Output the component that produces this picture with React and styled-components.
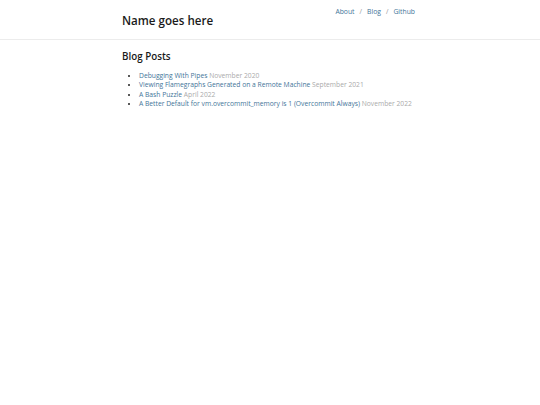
import React from 'react';
import styled, { createGlobalStyle } from 'styled-components';

const GlobalStyle = createGlobalStyle`
  body {
    margin: 0;
    background: #fff;
    font-family: "Open Sans", "Liberation Sans", sans-serif;
    color: #222;
  }
`;

const Header = styled.header`
  border-bottom: 1px solid #ececec;
  height: 39px;
`;

const Inner = styled.div`
  width: 296px;
  margin: 0 auto;
`;

const HeaderRow = styled(Inner)`
  display: flex;
  justify-content: space-between;
  align-items: flex-start;
`;

const SiteTitle = styled.h1`
  margin: 13px 0 0;
  font-size: 11.6px;
  font-weight: 600;
  line-height: 16px;
  color: #1a1a1a;
`;

const Nav = styled.nav`
  display: flex;
  gap: 5px;
  margin-top: 7px;
  font-size: 6.8px;
  line-height: 10px;
  padding-right: 3px;
`;

const Link = styled.a`
  color: #3f7599;
  text-decoration: none;
`;

const Sep = styled.span`
  color: #999;
`;

const Main = styled(Inner)`
  padding-top: 10px;
`;

const SectionTitle = styled.h2`
  margin: 0 0 7px;
  font-size: 9.8px;
  font-weight: 600;
  line-height: 14px;
  color: #1a1a1a;
`;

const PostList = styled.ul`
  margin: 0;
  padding-left: 17px;
  font-size: 6.73px;
  line-height: 9.3px;
  white-space: nowrap;
`;

const PostDate = styled.span`
  color: #aaa;
`;

const posts = [
  { title: 'Debugging With Pipes', date: 'November 2020' },
  { title: 'Viewing Flamegraphs Generated on a Remote Machine', date: 'September 2021' },
  { title: 'A Bash Puzzle', date: 'April 2022' },
  { title: 'A Better Default for vm.overcommit_memory is 1 (Overcommit Always)', date: 'November 2022' },
];

export default function App() {
  return (
    <>
      <GlobalStyle />
      <Header>
        <HeaderRow>
          <SiteTitle>Name goes here</SiteTitle>
          <Nav>
            <Link href="#">About</Link>
            <Sep>/</Sep>
            <Link href="#">Blog</Link>
            <Sep>/</Sep>
            <Link href="#">Github</Link>
          </Nav>
        </HeaderRow>
      </Header>
      <Main>
        <SectionTitle>Blog Posts</SectionTitle>
        <PostList>
          {posts.map((p) => (
            <li key={p.title}>
              <Link href="#">{p.title}</Link> <PostDate>{p.date}</PostDate>
            </li>
          ))}
        </PostList>
      </Main>
    </>
  );
}
